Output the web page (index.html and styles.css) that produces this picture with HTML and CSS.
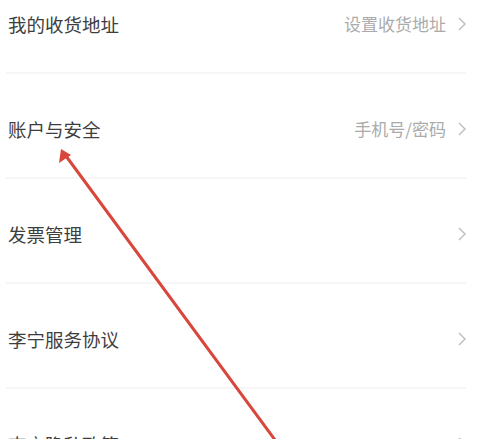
FILE: index.html
```html
<!DOCTYPE html>
<html lang="zh-CN">
<head>
  <meta charset="UTF-8">
  <title>设置</title>
  <meta name="viewport" content="width=device-width, initial-scale=1.0">
  <link rel="stylesheet" href="styles.css">
</head>
<body>

  <div class="list">
    <div class="row">
      <span class="label">我的收货地址</span>
      <span class="value">设置收货地址</span>
      <svg class="chevron" viewBox="0 0 8 14"><path d="M1 1 L7 7 L1 13"/></svg>
    </div>
    <div class="row">
      <span class="label">账户与安全</span>
      <span class="value">手机号/密码</span>
      <svg class="chevron" viewBox="0 0 8 14"><path d="M1 1 L7 7 L1 13"/></svg>
    </div>
    <div class="row">
      <span class="label">发票管理</span>
      <svg class="chevron" viewBox="0 0 8 14"><path d="M1 1 L7 7 L1 13"/></svg>
    </div>
    <div class="row">
      <span class="label">李宁服务协议</span>
      <svg class="chevron" viewBox="0 0 8 14"><path d="M1 1 L7 7 L1 13"/></svg>
    </div>
    <div class="row">
      <span class="label">李宁隐私政策</span>
      <svg class="chevron" viewBox="0 0 8 14"><path d="M1 1 L7 7 L1 13"/></svg>
    </div>
  </div>

  <!-- annotation arrow drawn over the screenshot -->
  <svg class="arrow" viewBox="0 0 484 439">
    <path class="shaft" d="M66 156 L278 444"/>
    <polygon class="head" points="61,149 59,163 71,155"/>
  </svg>

</body>
</html>
```

FILE: styles.css
```css
body {
  margin: 0;
  background-color: #fff;
  font-family: "Noto Sans CJK SC", "Noto Sans", sans-serif;
  overflow: hidden;
  height: 439px;
  position: relative;
}

.list {
  margin: -31px 18px 0 6px;
}

.row {
  box-sizing: border-box;
  height: 105px;
  padding: 6px 0 0 2px;
  display: flex;
  align-items: center;
  border-bottom: 2px solid #f6f6f6;
}

.label {
  flex: 1;
  font-size: 18.5px;
  color: #3e3e3e;
}

.value {
  font-size: 17px;
  color: #ababab;
  margin-right: 12px;
}

.chevron {
  width: 8px;
  height: 14px;
}

.chevron path {
  fill: none;
  stroke: #bcbcbc;
  stroke-width: 1.4;
}

.arrow {
  position: absolute;
  left: 0;
  top: 0;
  width: 484px;
  height: 439px;
}

.arrow .shaft {
  stroke: #d9463b;
  stroke-width: 3;
  stroke-linecap: round;
}

.arrow .head {
  fill: #d9463b;
}
```
